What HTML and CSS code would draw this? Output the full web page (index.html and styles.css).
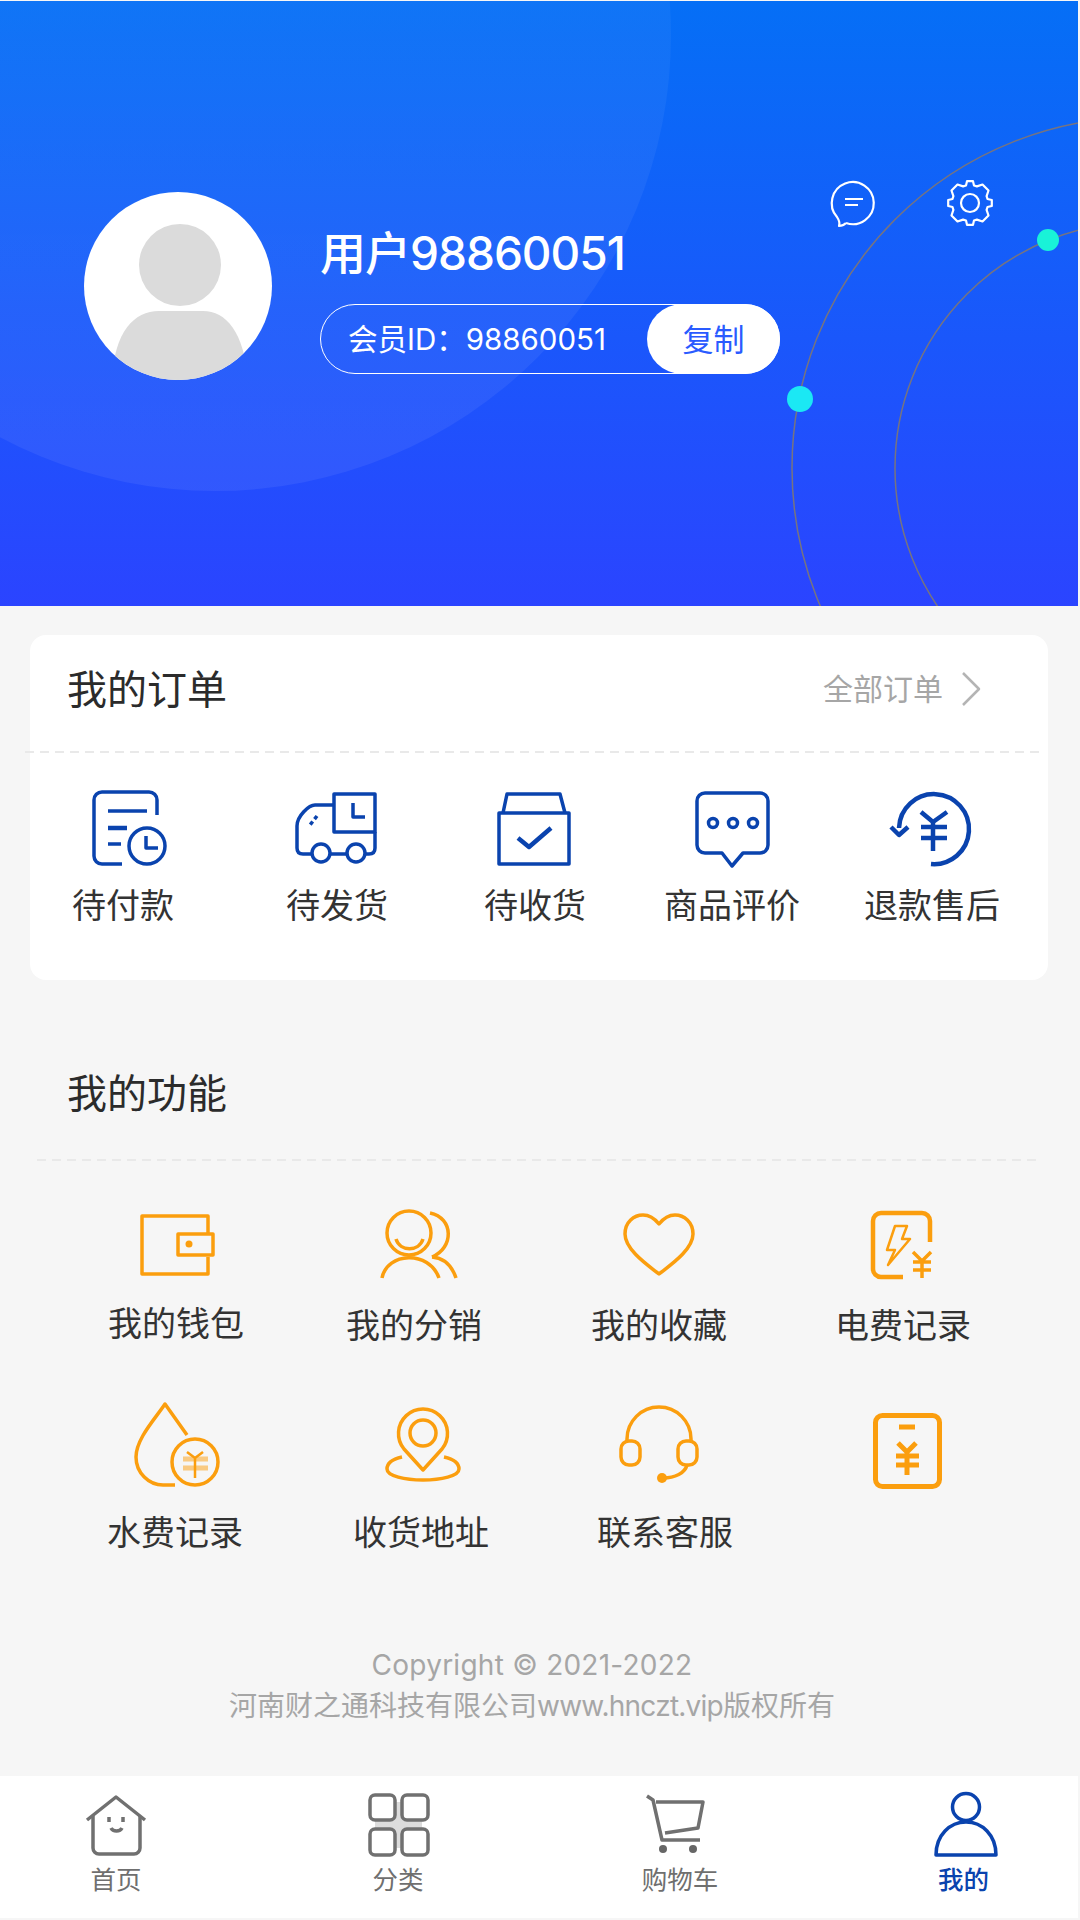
FILE: index.html
```html
<!DOCTYPE html>
<html lang="zh-CN">
<head>
  <meta charset="UTF-8">
  <title>我的</title>
  <link rel="stylesheet" href="styles.css">
</head>
<body>
<div class="app">

  <header class="profile">
    <svg class="profile-bg" viewBox="0 0 1078 605">
      <defs>
        <linearGradient id="glow-fill" x1="0" y1="0" x2="0" y2="1">
          <stop offset="0.05" stop-color="#fff" stop-opacity="0.025"/>
          <stop offset="1" stop-color="#fff" stop-opacity="0.065"/>
        </linearGradient>
      </defs>
      <circle fill="url(#glow-fill)" cx="215" cy="34" r="456"/>
      <circle class="orbit" cx="1143" cy="467" r="351"/>
      <circle class="orbit" cx="1141" cy="467" r="246"/>
      <circle class="dot-a" cx="800" cy="398" r="13"/>
      <circle class="dot-b" cx="1048" cy="239" r="11"/>
      <g class="line-white">
        <path d="M846 222A21 21 0 1 0 837 216C839 219 840 222 839 225C842 225 844 224 846 222"/>
        <path d="M845 198H863M845 204H858"/>
        <circle cx="970" cy="202" r="9"/>
        <polygon transform="translate(970 202)" points="21.8,-3 17.5,-4 16.6,-6.9 18.5,-12.5 12.5,-18.5 6.9,-16.6 4,-17.5 3,-21.8 -3,-21.8 -4,-17.5 -6.9,-16.6 -12.5,-18.5 -18.5,-12.5 -16.6,-6.9 -17.5,-4 -21.8,-3 -21.8,3 -17.5,4 -16.6,6.9 -18.5,12.5 -12.5,18.5 -6.9,16.6 -4,17.5 -3,21.8 3,21.8 4,17.5 6.9,16.6 12.5,18.5 18.5,12.5 16.6,6.9 17.5,4 21.8,3"/>
      </g>
    </svg>
    <svg class="avatar" width="188" height="188" viewBox="0 0 188 188">
      <defs><clipPath id="avatar-clip"><circle cx="94" cy="94" r="94"/></clipPath></defs>
      <circle cx="94" cy="94" r="94" fill="#fff"/>
      <g clip-path="url(#avatar-clip)" fill="#dbdbdb">
        <circle cx="96" cy="73" r="41"/>
        <path d="M28 188C30 140 50 119 75 119H119C142 119 160 140 164 188Z"/>
      </g>
    </svg>
    <div class="user-info">
      <div class="user-name">用户98860051</div>
      <div class="member-pill">
        <span class="member-id">会员ID：98860051</span>
        <span class="copy-btn">复制</span>
      </div>
    </div>
  </header>

  <section class="order-card">
    <div class="order-head">
      <h2 class="section-title">我的订单</h2>
      <div class="order-all">
        <span>全部订单</span>
        <svg class="line-grey" width="22" height="36" viewBox="0 0 22 36"><path d="M3 2L19 18L3 34"/></svg>
      </div>
    </div>
    <div class="dash dash-order"></div>
    <div class="order-list">
      <div class="icon-item">
        <svg class="line-blue" width="100" height="84" viewBox="0 0 100 84">
          <path d="M84 29V14a8 8 0 0 0-8-8H29a8 8 0 0 0-8 8V70a8 8 0 0 0 8 8H49"/>
          <path d="M35 25H74M35 58H48"/>
          <path class="thick" d="M35 42H54"/>
          <circle cx="74" cy="60" r="18"/>
          <path d="M73 50V62H85"/>
        </svg>
        <span>待付款</span>
      </div>
      <div class="icon-item">
        <svg class="line-blue" width="100" height="84" viewBox="0 0 100 84">
          <rect x="47" y="8" width="41" height="38"/>
          <path d="M66 17V31H78"/>
          <path d="M25 68H16q-6 0-6-6V40c0-10 12-21 18-21H47"/>
          <path d="M78 68h4q6 0 6-6V46M43 68H60"/>
          <circle cx="34" cy="67" r="9"/>
          <circle cx="69" cy="67" r="9"/>
          <path d="M30 30L23 39" stroke-dasharray="4 3"/>
        </svg>
        <span>待发货</span>
      </div>
      <div class="icon-item">
        <svg class="line-blue" width="100" height="84" viewBox="0 0 100 84">
          <rect x="14" y="27" width="70" height="51"/>
          <path d="M18 27L22 8H75L80 27"/>
          <path class="thick" d="M33 52L44 61L66 42"/>
        </svg>
        <span>待收货</span>
      </div>
      <div class="icon-item">
        <svg class="line-blue" width="100" height="84" viewBox="0 0 100 84">
          <path d="M23 7H78a8 8 0 0 1 8 8V59a8 8 0 0 1-8 8H61L50 80L40 67H23a8 8 0 0 1-8-8V15a8 8 0 0 1 8-8Z"/>
          <circle cx="31" cy="37" r="4.5"/>
          <circle cx="51" cy="37" r="4.5"/>
          <circle cx="71" cy="37" r="4.5"/>
        </svg>
        <span>商品评价</span>
      </div>
      <div class="icon-item">
        <svg class="line-blue" width="100" height="84" viewBox="0 0 100 84">
          <path class="thick" d="M49 78A35 35 0 1 0 17 42"/>
          <path class="thick" d="M9 41L17 49L26 41"/>
          <path class="thick" d="M39 26L51 36L65 26M39 41H65M39 52H65M51 36V65"/>
        </svg>
        <span>退款售后</span>
      </div>
    </div>
  </section>

  <section class="features">
    <h2 class="section-title">我的功能</h2>
    <div class="dash dash-feature"></div>
    <div class="feature-row feature-row-a">
      <div class="icon-item">
        <svg class="line-orange" width="120" height="88" viewBox="0 0 120 88">
          <path d="M92 33V16H26V74H92V57"/>
          <rect x="62" y="34" width="35" height="21"/>
          <circle class="solid" cx="73" cy="44" r="3.5"/>
        </svg>
        <span>我的钱包</span>
      </div>
      <div class="icon-item">
        <svg class="line-orange" width="120" height="90" viewBox="0 0 120 90">
          <circle cx="55" cy="33" r="22"/>
          <path d="M42 39C46 52 65 52 69 39"/>
          <path d="M76 13C100 18 100 48 78 57"/>
          <path d="M28 78C33 52 75 50 85 78"/>
          <path d="M78 57C90 58 98 66 102 78"/>
        </svg>
        <span>我的分销</span>
      </div>
      <div class="icon-item">
        <svg class="line-orange" width="120" height="90" viewBox="0 0 120 90">
          <path d="M60 74C50 66 26 50 26 34C26 22 35 15 44 15C51 15 56 19 60 24C64 19 69 15 76 15C85 15 94 22 94 34C94 50 70 66 60 74Z"/>
        </svg>
        <span>我的收藏</span>
      </div>
      <div class="icon-item">
        <svg class="line-orange" width="120" height="90" viewBox="0 0 120 90">
          <path class="thick" d="M87 42V21a8 8 0 0 0-8-8H38a8 8 0 0 0-8 8V69a8 8 0 0 0 8 8H60"/>
          <path class="thin" d="M52 26H64L59 39H67L45 65L52 50H44Z"/>
          <path d="M70 52L79 61L88 52M70 62H88M70 70H88M79 61V78"/>
        </svg>
        <span>电费记录</span>
      </div>
    </div>
    <div class="feature-row feature-row-b">
      <div class="icon-item">
        <svg class="line-orange" width="120" height="102" viewBox="0 0 120 102">
          <path d="M72 40L50 9C40 24 21 44 21 62C21 78 34 90 48 90H60"/>
          <circle cx="80" cy="67" r="23"/>
          <path class="thin" d="M72 57L80 63L88 57M80 63V83"/>
          <path class="pale" d="M68 64H93M68 73H93"/>
        </svg>
        <span>水费记录</span>
      </div>
      <div class="icon-item">
        <svg class="line-orange" width="120" height="102" viewBox="0 0 120 102">
          <path d="M62 75L43 54A24.5 24.5 0 1 1 81 54Z"/>
          <circle cx="62" cy="38" r="13"/>
          <path d="M41 62C32 64 26 68 26 74C26 81 44 85 62 85C80 85 98 81 98 74C98 68 92 64 83 62"/>
        </svg>
        <span>收货地址</span>
      </div>
      <div class="icon-item">
        <svg class="line-orange" width="120" height="102" viewBox="0 0 120 102">
          <path d="M22 46V44A32 32 0 0 1 86 44V46"/>
          <rect x="16" y="46" width="19" height="24" rx="8"/>
          <rect x="73" y="46" width="19" height="24" rx="8"/>
          <path d="M82 70C80 78 70 83 58 83"/>
          <circle class="solid" cx="57" cy="83" r="5"/>
        </svg>
        <span>联系客服</span>
      </div>
      <div class="icon-item">
        <svg class="line-orange" width="120" height="102" viewBox="0 0 120 102">
          <rect class="bold" x="27.5" y="20.5" width="64" height="71" rx="7"/>
          <path class="bold" d="M51 32H67M50 48L59 57L68 48M48 61H71M48 70H71M59 57V80"/>
        </svg>
      </div>
    </div>
  </section>

  <footer class="copyright">
    <div class="copyright-year">Copyright © 2021-2022</div>
    <div>河南财之通科技有限公司<span class="copyright-site">www.hnczt.vip</span>版权所有</div>
  </footer>

  <nav class="tabbar">
    <div class="tab">
      <svg class="line-grey-dark" width="100" height="70" viewBox="0 0 100 70">
        <path d="M21 30L50 7L79 30"/>
        <path d="M27 26V58a6 6 0 0 0 6 6H68a6 6 0 0 0 6-6V26"/>
        <path d="M43 27V32M57 27V32M45 38C47 42 54 42 56 38"/>
      </svg>
      <span>首页</span>
    </div>
    <div class="tab">
      <svg class="line-grey-dark" width="100" height="70" viewBox="0 0 100 70">
        <rect class="cross" x="27" y="12" width="47" height="46"/>
        <rect class="cell" x="22" y="5" width="25" height="25" rx="5"/>
        <rect class="cell" x="54" y="5" width="26" height="25" rx="5"/>
        <rect class="cell" x="22" y="39" width="25" height="26" rx="5"/>
        <rect class="cell" x="54" y="39" width="26" height="26" rx="5"/>
      </svg>
      <span>分类</span>
    </div>
    <div class="tab">
      <svg class="line-grey-dark" width="100" height="70" viewBox="0 0 100 70">
        <path d="M17 6L23 10L32 50H70"/>
        <path d="M26 12H73L68 38L35 43"/>
        <circle class="solid" cx="33" cy="59" r="4"/>
        <circle class="solid" cx="63" cy="59" r="4"/>
      </svg>
      <span>购物车</span>
    </div>
    <div class="tab tab-active">
      <svg class="line-blue" width="100" height="70" viewBox="0 0 100 70">
        <circle cx="54" cy="17" r="13.5"/>
        <path d="M24 65C24 45 38 32 54 32C70 32 84 45 84 65Z"/>
      </svg>
      <span>我的</span>
    </div>
  </nav>

</div>
</body>
</html>
```

FILE: styles.css
```css
:root {
  --blue: #0a43ae;
  --orange: #fb9e0e;
  --text: #333;
  --text-muted: #a6a6a6;
  --page-bg: #f6f6f6;
}

* {
  box-sizing: border-box;
}

html,
body {
  margin: 0;
  height: 1920px;
  overflow: hidden;
  background: var(--page-bg);
}

body {
  font-family: "Inter", "Noto Sans CJK SC", sans-serif;
  color: var(--text);
}

.app {
  width: 1078px;
  padding-top: 1px;
}

/* header */
.profile {
  position: relative;
  height: 605px;
  overflow: hidden;
  display: flex;
  align-items: flex-start;
  gap: 48px;
  padding: 191px 0 0 84px;
  background: linear-gradient(180deg, #056ff6 0%, #2b44ff 100%);
}

.profile-bg {
  position: absolute;
  left: 0;
  top: 0;
  width: 1078px;
  height: 605px;
}

.orbit {
  fill: none;
  stroke: #77747f;
  stroke-width: 1.5;
}

.dot-a {
  fill: #1be8f4;
}

.dot-b {
  fill: #19f2d8;
}

.line-white {
  fill: none;
  stroke: #fff;
  stroke-width: 2.2;
  stroke-linejoin: round;
}

.avatar,
.user-info {
  position: relative;
}

.user-info {
  padding-top: 31px;
}

.user-name {
  font-size: 46px;
  line-height: 60px;
  font-weight: 500;
  letter-spacing: -1px;
  color: #fff;
}

.member-pill {
  display: flex;
  align-items: center;
  justify-content: space-between;
  width: 460px;
  height: 70px;
  margin-top: 21px;
  padding-left: 27px;
  border: 1px solid #fff;
  border-radius: 35px;
  color: #fff;
  font-size: 29.5px;
}

.member-id {
  margin-bottom: 5px;
}

.copy-btn {
  display: flex;
  align-items: center;
  justify-content: center;
  width: 133px;
  height: 70px;
  margin: -1px;
  padding-bottom: 4px;
  border-radius: 35px;
  background: #fff;
  color: #2a5bff;
  font-size: 31px;
}

/* shared */
.section-title {
  margin: 0;
  font-size: 40px;
  line-height: 56px;
  font-weight: 400;
  color: #2b2b2b;
}

.dash {
  height: 2px;
  background: repeating-linear-gradient(90deg, #e9e9e9 0 9px, transparent 9px 15px);
}

.icon-item {
  display: flex;
  flex-direction: column;
  align-items: center;
  font-size: 34px;
  line-height: 40px;
  white-space: nowrap;
}

.line-blue,
.line-orange,
.line-grey,
.line-grey-dark {
  fill: none;
  stroke-width: 3.5;
  stroke-linejoin: round;
}

.line-blue {
  stroke: var(--blue);
}

.line-orange {
  stroke: var(--orange);
}

.line-grey {
  stroke: #b4b4b4;
  stroke-width: 2.5;
}

.line-grey-dark {
  stroke: #707070;
}

.thick {
  stroke-width: 4.5;
}

.thin {
  stroke-width: 2.5;
}

.bold {
  stroke-width: 5;
}

.pale {
  stroke-width: 5;
  opacity: 0.5;
}

.line-orange .solid {
  fill: var(--orange);
  stroke: none;
}

.line-grey-dark .solid {
  fill: #666;
  stroke: none;
}

/* orders */
.order-card {
  position: relative;
  width: 1018px;
  height: 345px;
  margin: 29px 0 0 30px;
  border-radius: 16px;
  background: #fff;
}

.order-head {
  display: flex;
  align-items: center;
  justify-content: space-between;
  height: 116px;
  padding: 0 66px 7px 37px;
}

.order-all {
  display: flex;
  align-items: center;
  gap: 17px;
  margin-bottom: 5px;
  font-size: 30px;
  color: var(--text-muted);
}

.order-all svg {
  margin-top: 4px;
}

.dash-order {
  margin: 0 7px 0 -5px;
}

.order-list {
  display: grid;
  grid-template-columns: 186px 242px 154px 240px 160px;
  padding-top: 33px;
}

.order-list span {
  margin-top: 16px;
}

/* features */
.features {
  margin-top: 86px;
}

.features .section-title {
  padding-left: 67px;
}

.dash-feature {
  margin: 37px 41px 0 37px;
}

.feature-row {
  display: grid;
  padding-left: 52px;
  align-items: start;
}

.feature-row-a {
  grid-template-columns: 248px 228px 262px 226px;
  margin-top: 39px;
}

.feature-row-b {
  grid-template-columns: 246px 246px 242px 244px;
  margin-top: 49px;
}

.feature-row span {
  margin-top: 16px;
}

/* footer */
.copyright {
  width: 1064px;
  margin-top: 92px;
  text-align: center;
  font-size: 28px;
  line-height: 41px;
  color: var(--text-muted);
}

.copyright-year {
  letter-spacing: 0.25px;
}

.copyright-site {
  letter-spacing: -0.75px;
}

.tabbar {
  display: flex;
  gap: 182px;
  height: 142px;
  margin-top: 49px;
  padding: 14px 0 0 66px;
  background: #fff;
}

.tab {
  display: flex;
  flex-direction: column;
  align-items: center;
  gap: 5px;
  width: 100px;
  font-size: 25.5px;
  line-height: 30px;
  color: #6f6f6f;
  white-space: nowrap;
}

.tab-active {
  color: var(--blue);
  font-weight: 500;
}

.tab-active span {
  margin-left: 3px;
}

.cross {
  fill: #dcdcdc;
  stroke: none;
}

.cell {
  fill: #fff;
}
```
